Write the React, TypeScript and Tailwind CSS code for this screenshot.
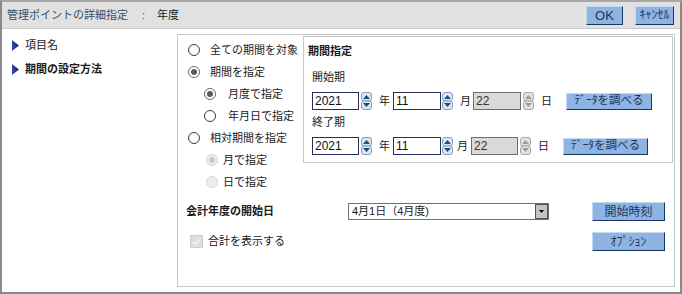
import clsx from 'clsx'

const btn =
  'flex items-center justify-center bg-[#8db4e2] text-[#1f3458] border border-t-[#c6d9f0] border-l-[#c6d9f0] border-r-[#17375e] border-b-[#17375e] leading-none'

function Radio({ checked, disabled }: { checked?: boolean; disabled?: boolean }) {
  return (
    <span
      className={clsx(
        'w-[12px] h-[12px] rounded-full border flex items-center justify-center shrink-0',
        disabled ? 'border-[#d6d6d6] bg-[#ededed]' : checked ? 'border-[#6a6a6a] bg-white' : 'border-[#3a3a3a] bg-white'
      )}
    >
      {checked && (
        <span className={clsx('w-[6px] h-[6px] rounded-full', disabled ? 'bg-[#cacaca]' : 'bg-[#5a5a5a]')} />
      )}
    </span>
  )
}

function RadioRow({
  label,
  checked,
  disabled,
  className,
}: {
  label: string
  checked?: boolean
  disabled?: boolean
  className: string
}) {
  return (
    <div className={clsx('h-[22px] flex items-center', className)}>
      <Radio checked={checked} disabled={disabled} />
      <span className="leading-none">{label}</span>
    </div>
  )
}

function Spinner({ disabled, className }: { disabled?: boolean; className?: string }) {
  const stroke = disabled ? '#a6a6a6' : '#7f9fc6'
  const fill = disabled ? '#e2e2e2' : '#dce6f2'
  const tri = disabled ? '#9c9c9c' : '#1f4e79'
  return (
    <svg width="11" height="18" viewBox="0 0 11 18" className={clsx('shrink-0', className)}>
      <rect x="0.5" y="0.5" width="10" height="8.5" rx="2.5" fill={fill} stroke={stroke} />
      <rect x="0.5" y="9" width="10" height="8.5" rx="2.5" fill={fill} stroke={stroke} />
      <polygon points="2,7 5.5,3 9,7" fill={tri} />
      <polygon points="2,11 9,11 5.5,15" fill={tri} />
    </svg>
  )
}

function NumBox({ value, disabled, className }: { value: string; disabled?: boolean; className: string }) {
  return (
    <div
      className={clsx(
        'h-full flex items-center pl-[2px] border text-[12px] leading-none',
        disabled ? 'bg-[#dadada] border-[#6e6e6e] text-[#333]' : 'bg-white border-[#2d2b5e] text-[#111]',
        className
      )}
    >
      {value}
    </div>
  )
}

function NavTriangle() {
  return (
    <svg width="7" height="11" viewBox="0 0 7 11" className="shrink-0">
      <defs>
        <linearGradient id="navtri" x1="0" y1="0" x2="1" y2="0">
          <stop offset="0" stopColor="#3a48b8" />
          <stop offset="1" stopColor="#141d6e" />
        </linearGradient>
      </defs>
      <polygon points="0,0 7,5.5 0,11" fill="url(#navtri)" />
    </svg>
  )
}

export default function App() {
  return (
    <div className="w-[682px] h-[294px] border-2 border-[#8a8a8a] border-t-[#a8a8a8] bg-white flex flex-col font-['Liberation_Sans','Noto_Sans_CJK_JP',sans-serif] text-[11px] text-[#1a1a1a] overflow-hidden">
      {/* Header */}
      <header className="h-[27px] shrink-0 bg-[#e1e1e1] border-b border-[#cbcbcb] flex items-center pl-[5px] pr-[6px]">
        <span className="text-[#34506f] leading-none">管理ポイントの詳細指定</span>
        <span className="ml-[14px] text-[#34506f] leading-none">:</span>
        <span className="ml-[12px] leading-none">年度</span>
        <div className="ml-auto flex gap-[12px]">
          <button className={clsx(btn, 'w-[37px] h-[19px] text-[13px] text-[#1c2c48]')}>OK</button>
          <button className={clsx(btn, 'w-[39px] h-[19px] text-[12px]')}>ｷｬﾝｾﾙ</button>
        </div>
      </header>

      <div className="flex flex-1 min-h-0">
        {/* Left navigation */}
        <nav className="w-[175px] shrink-0 pt-[4px] pl-[10px]">
          <div className="h-[24px] flex items-center gap-[6px]">
            <NavTriangle />
            <span className="leading-none">項目名</span>
          </div>
          <div className="h-[24px] flex items-center gap-[6px]">
            <NavTriangle />
            <span className="leading-none font-bold">期間の設定方法</span>
          </div>
        </nav>

        {/* Settings panel */}
        <section className="flex-1 my-[5px] mr-[5px] border border-[#c8c8c8] flex flex-col">
          <div className="flex">
            <div className="w-[125px] shrink-0 pt-[4px]">
              <RadioRow className="pl-[10px] gap-[10px]" label="全ての期間を対象" />
              <RadioRow className="pl-[10px] gap-[10px]" label="期間を指定" checked />
              <RadioRow className="pl-[26px] gap-[12px]" label="月度で指定" checked />
              <RadioRow className="pl-[26px] gap-[12px]" label="年月日で指定" />
              <RadioRow className="pl-[10px] gap-[10px]" label="相対期間を指定" />
              <RadioRow className="pl-[28px] gap-[5px]" label="月で指定" checked disabled />
              <RadioRow className="pl-[28px] gap-[5px]" label="日で指定" disabled />
            </div>

            {/* 期間指定 group */}
            <div className="flex-1 h-[127px] mt-[1px] mr-[1px] border border-[#c8c8c8] flex flex-col">
              <div className="h-[16px] mt-[6px] ml-[4px] flex items-center font-bold leading-none">期間指定</div>
              <div className="h-[16px] mt-[10px] ml-[8px] flex items-center leading-none">開始期</div>
              <div className="h-[18px] mt-[7px] flex items-center">
                <NumBox value="2021" className="ml-[8px] w-[47px]" />
                <Spinner className="ml-[2px]" />
                <span className="ml-[7px] leading-none">年</span>
                <NumBox value="11" className="ml-[3px] w-[48px]" />
                <Spinner className="ml-[1px]" />
                <span className="ml-[7px] leading-none">月</span>
                <NumBox value="22" disabled className="ml-[2px] w-[48px]" />
                <Spinner disabled className="ml-[2px]" />
                <span className="ml-[7px] leading-none">日</span>
                <button className={clsx(btn, 'ml-[14px] w-[86px] h-[17px] text-[11.5px]')}>ﾃﾞｰﾀを調べる</button>
              </div>
              <div className="h-[16px] mt-[4px] ml-[8px] flex items-center leading-none">終了期</div>
              <div className="h-[18px] mt-[7px] flex items-center">
                <NumBox value="2021" className="ml-[8px] w-[47px]" />
                <Spinner className="ml-[2px]" />
                <span className="ml-[7px] leading-none">年</span>
                <NumBox value="11" className="ml-[3px] w-[48px]" />
                <Spinner className="ml-[1px]" />
                <span className="ml-[4px] leading-none">月</span>
                <NumBox value="22" disabled className="ml-[3px] w-[47px]" />
                <Spinner disabled className="ml-[2px]" />
                <span className="ml-[7px] leading-none">日</span>
                <button className={clsx(btn, 'ml-[14px] w-[85px] h-[17px] text-[11.5px]')}>ﾃﾞｰﾀを調べる</button>
              </div>
            </div>
          </div>

          {/* 会計年度 */}
          <div className="h-[19px] mt-[9px] flex items-center pl-[8px]">
            <span className="w-[162px] font-bold leading-none">会計年度の開始日</span>
            <div className="w-[201px] h-[17px] border border-[#6f6f6f] bg-white flex items-center">
              <span className="flex-1 pl-[3px] leading-none">4月1日（4月度)</span>
              <span className="w-[13px] h-[15px] bg-[#c4c4c4] border border-[#555] flex items-center justify-center">
                <svg width="5" height="3" viewBox="0 0 5 3">
                  <polygon points="0,0 5,0 2.5,3" fill="#000" />
                </svg>
              </span>
            </div>
            <button className={clsx(btn, 'ml-auto mr-[9px] w-[73px] h-[19px] text-[12px]')}>開始時刻</button>
          </div>

          <div className="h-[19px] mt-[11px] flex items-center pl-[12px]">
            <span className="w-[13px] h-[13px] bg-[#dedede] border border-[#cfcfcf] flex items-center justify-center">
              <svg width="9" height="8" viewBox="0 0 9 8">
                <polyline points="1,4 3.5,6.5 8,1" fill="none" stroke="#f4f4f4" strokeWidth="1.8" />
              </svg>
            </span>
            <span className="ml-[5px] leading-none">合計を表示する</span>
            <button className={clsx(btn, 'ml-auto mr-[9px] w-[73px] h-[19px] text-[12px]')}>ｵﾌﾟｼｮﾝ</button>
          </div>
        </section>
      </div>
    </div>
  )
}
